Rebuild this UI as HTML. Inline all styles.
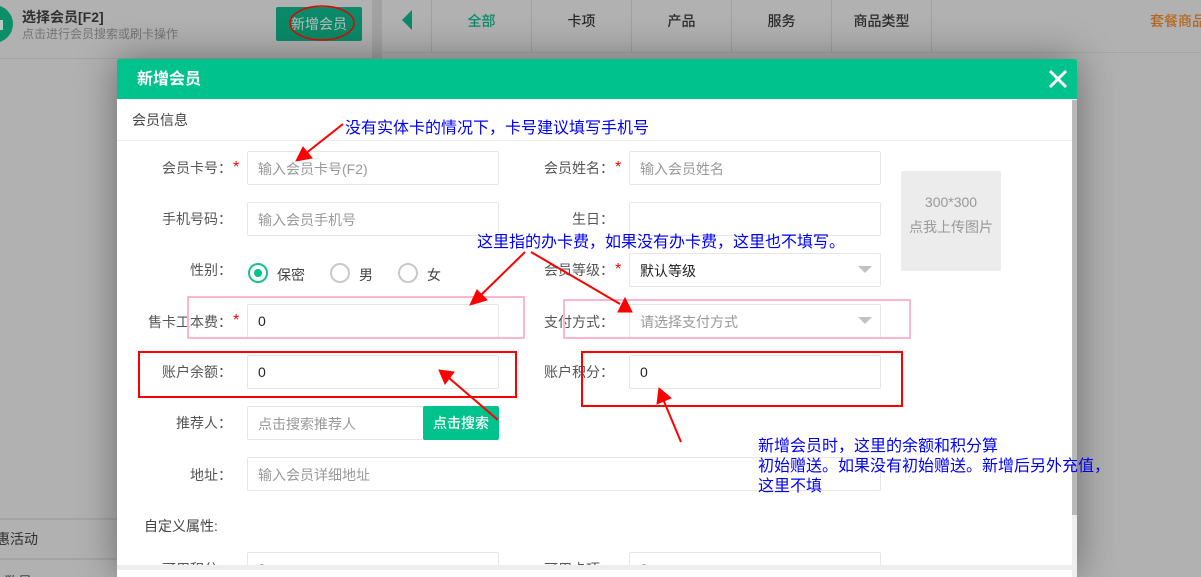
<!DOCTYPE html>
<html lang="zh">
<head>
<meta charset="utf-8">
<style>
html,body{margin:0;padding:0;width:1201px;height:577px;overflow:hidden;}
#root{width:1201px;height:577px;overflow:hidden;position:relative;background:#b1b1b1;font-family:"Liberation Sans","Noto Sans CJK SC",sans-serif;font-size:14px;color:#555;}
.a{position:absolute;white-space:nowrap;}
.bgt{color:#303030;}
.tab{position:absolute;top:0;height:52px;width:100px;line-height:43px;text-align:center;font-weight:500;color:#2c2c2c;border-left:1px solid #a0a0a0;box-sizing:border-box;}
.line{position:absolute;background:#a4a4a4;}
#modal{position:absolute;left:117px;top:59px;width:960px;height:518px;background:#fff;box-shadow:0 0 40px rgba(0,0,0,.4);border-radius:2px 2px 0 0;overflow:hidden;}
.lb{position:absolute;text-align:right;line-height:20px;color:#555;width:120px;white-space:nowrap;}
.st{position:absolute;color:#f00;font-size:16px;line-height:20px;}
.in{position:absolute;box-sizing:border-box;width:252px;height:34px;border:1px solid #e6e6e6;border-radius:2px;background:#fff;padding-left:10px;line-height:34px;color:#999;white-space:nowrap;}
.v{color:#222;font-size:14px;line-height:33px;}
.cr{position:absolute;width:0;height:0;border-left:7px solid transparent;border-right:7px solid transparent;border-top:7px solid #c2c2c2;}
.rd{position:absolute;box-sizing:border-box;width:20px;height:20px;border-radius:50%;border:2px solid #c9c9c9;background:#fff;}
.note{position:absolute;color:#0000f5;font-size:16px;line-height:20px;white-space:nowrap;font-family:"Liberation Sans","WenQuanYi Zen Hei",sans-serif;}
</style>
</head>
<body>
<div id="root">
<!-- background page -->
<div class="a" style="left:-25px;top:5px;width:38px;height:38px;border-radius:50%;background:#0a8f68;"></div>
<div class="a" style="left:0;top:20px;width:3px;height:10px;background:#b5c9c0;"></div>
<div class="a bgt" style="left:22px;top:7px;font-weight:700;line-height:20px;">选择会员[F2]</div>
<div class="a" style="left:22px;top:25px;font-size:12px;line-height:18px;color:#747474;">点击进行会员搜索或刷卡操作</div>
<div class="a" style="left:276px;top:7px;width:86px;height:34px;background:#0a8a68;border-radius:2px;color:#bdbdbd;text-align:center;line-height:34px;">新增会员</div>
<div class="line" style="left:0;top:58px;width:372px;height:1px;"></div>
<div class="a" style="left:372px;top:0;width:10px;height:59px;background:#a2a2a2;"></div>
<div class="line" style="left:382px;top:52px;width:819px;height:1px;"></div>
<div class="a" style="left:402px;top:10px;width:0;height:0;border-top:10px solid transparent;border-bottom:10px solid transparent;border-right:10px solid #0a8a68;"></div>
<div class="tab" style="left:431px;color:#0a8a68;">全部</div>
<div class="tab" style="left:531px;">卡项</div>
<div class="tab" style="left:631px;">产品</div>
<div class="tab" style="left:731px;">服务</div>
<div class="tab" style="left:831px;width:101px;border-right:1px solid #a0a0a0;">商品类型</div>
<div class="a" style="left:1150px;top:0;line-height:43px;color:#b5671d;font-weight:500;">套餐商品</div>
<div class="line" style="left:0;top:518px;width:117px;height:2px;"></div>
<div class="line" style="left:0;top:558px;width:117px;height:2px;"></div>
<div class="a bgt" style="left:-18px;top:529px;line-height:20px;">优惠活动</div>
<div class="a bgt" style="left:-10px;top:572px;line-height:20px;">卡数量：0</div>

<!-- modal -->
<div id="modal">
  <div class="a" style="left:0;top:0;width:960px;height:40px;background:#00c28c;"></div>
  <div class="a" style="left:20px;top:9px;font-size:16px;font-weight:700;color:#fff;line-height:24px;">新增会员</div>
  <svg class="a" style="left:931px;top:10px;" width="20" height="20" viewBox="0 0 20 20"><path d="M2 2L18 18M18 2L2 18" stroke="#fff" stroke-width="3" fill="none"/></svg>
  <div class="a" style="left:15px;top:51px;line-height:20px;color:#444;">会员信息</div>
  <div class="a" style="left:0;top:81px;width:955px;height:1px;background:#eee;"></div>

  <div class="lb" style="left:-5px;top:99px;">会员卡号：</div><div class="st" style="left:116px;top:99px;">*</div>
  <div class="in" style="left:130px;top:92px;">输入会员卡号(F2)</div>
  <div class="lb" style="left:377px;top:99px;">会员姓名：</div><div class="st" style="left:498px;top:99px;">*</div>
  <div class="in" style="left:512px;top:92px;">输入会员姓名</div>
  <div class="a" style="left:784px;top:112px;width:100px;height:100px;background:#ececec;border-radius:2px 2px 0 0;text-align:center;color:#999;">
    <div style="margin-top:20px;line-height:22px;font-size:14px;">300*300</div>
    <div style="margin-top:3px;line-height:22px;">点我上传图片</div>
  </div>

  <div class="lb" style="left:-5px;top:150px;">手机号码：</div>
  <div class="in" style="left:130px;top:143px;">输入会员手机号</div>
  <div class="lb" style="left:377px;top:150px;">生日：</div>
  <div class="in" style="left:512px;top:143px;"></div>

  <div class="lb" style="left:-5px;top:201px;">性别：</div>
  <div class="rd" style="left:131px;top:204px;border-color:#1cbf90;"></div>
  <div class="a" style="left:137px;top:210px;width:8px;height:8px;border-radius:50%;background:#00c28c;"></div>
  <div class="a" style="left:160px;top:206px;line-height:20px;color:#444;">保密</div>
  <div class="rd" style="left:213px;top:204px;"></div>
  <div class="a" style="left:242px;top:206px;line-height:20px;color:#444;">男</div>
  <div class="rd" style="left:281px;top:204px;"></div>
  <div class="a" style="left:310px;top:206px;line-height:20px;color:#444;">女</div>
  <div class="lb" style="left:377px;top:201px;">会员等级：</div><div class="st" style="left:498px;top:201px;">*</div>
  <div class="in" style="left:512px;top:194px;color:#222;">默认等级</div>
  <div class="cr" style="left:741px;top:207px;"></div>

  <div class="lb" style="left:-5px;top:253px;">售卡工本费：</div><div class="st" style="left:116px;top:252px;">*</div>
  <div class="in v" style="left:130px;top:245px;">0</div>
  <div class="lb" style="left:377px;top:253px;">支付方式：</div>
  <div class="in" style="left:512px;top:245px;">请选择支付方式</div>
  <div class="cr" style="left:741px;top:258px;"></div>

  <div class="lb" style="left:-5px;top:303px;">账户余额：</div>
  <div class="in v" style="left:130px;top:296px;">0</div>
  <div class="lb" style="left:377px;top:303px;">账户积分：</div>
  <div class="in v" style="left:512px;top:296px;">0</div>

  <div class="lb" style="left:-5px;top:354px;">推荐人：</div>
  <div class="in" style="left:130px;top:347px;width:190px;">点击搜索推荐人</div>
  <div class="a" style="left:306px;top:347px;width:76px;height:34px;background:#00c28c;border-radius:2px;color:#fff;text-align:center;line-height:34px;font-weight:500;">点击搜索</div>

  <div class="lb" style="left:-5px;top:406px;">地址：</div>
  <div class="in" style="left:130px;top:398px;width:634px;">输入会员详细地址</div>

  <div class="a" style="left:27px;top:457px;line-height:20px;color:#444;">自定义属性:</div>

  <div class="lb" style="left:-5px;top:500px;">可用积分：</div>
  <div class="in v" style="left:130px;top:493px;">0</div>
  <div class="lb" style="left:377px;top:500px;">可用卡项：</div>
  <div class="in v" style="left:512px;top:493px;">0</div>

  <div class="a" style="left:0;top:506px;width:955px;height:5px;background:#eee;"></div>
  <div class="a" style="left:0;top:511px;width:955px;height:7px;background:#fff;"></div>
  <div class="a" style="left:955px;top:40px;width:5px;height:478px;background:#eee;"></div>
  <div class="a" style="left:955px;top:41px;width:5px;height:415px;background:#b8b8b8;"></div>
</div>

<!-- annotations -->
<svg class="a" style="left:0;top:0;" width="1201" height="577" viewBox="0 0 1201 577">
  <ellipse cx="322" cy="23" rx="32" ry="17" fill="none" stroke="#e60000" stroke-width="1.5"/>
  <rect x="188" y="297" width="336" height="41" fill="none" stroke="#ffb6cc" stroke-width="2"/>
  <rect x="564" y="300" width="346" height="38" fill="none" stroke="#ffb6cc" stroke-width="2"/>
  <rect x="139" y="352" width="377" height="45" fill="none" stroke="#f00" stroke-width="2"/>
  <rect x="582" y="352" width="320" height="54" fill="none" stroke="#f00" stroke-width="2"/>
  <g stroke="#f00" stroke-width="2" fill="#f00">
    <path d="M343 124L305 154"/><path d="M296 161L303 147L312 158Z" stroke-width="1"/>
    <path d="M525 252L479 297"/><path d="M470 305L477 290L487 300Z" stroke-width="1"/>
    <path d="M531 252L620 304"/><path d="M632 312L618 312L625 298Z" stroke-width="1"/>
    <path d="M498 420L449 378"/><path d="M439 370L454 372L445 384Z" stroke-width="1"/>
    <path d="M681 442L663 399"/><path d="M659 388L671 398L657 404Z" stroke-width="1"/>
  </g>
</svg>
<div class="note" style="left:345px;top:119px;">没有实体卡的情况下，卡号建议填写手机号</div>
<div class="note" style="left:477px;top:233px;">这里指的办卡费，如果没有办卡费，这里也不填写。</div>
<div class="note" style="left:758px;top:437px;">新增会员时，这里的余额和积分算<br>初始赠送。如果没有初始赠送。新增后另外充值，<br>这里不填</div>
</div>
</body>
</html>
